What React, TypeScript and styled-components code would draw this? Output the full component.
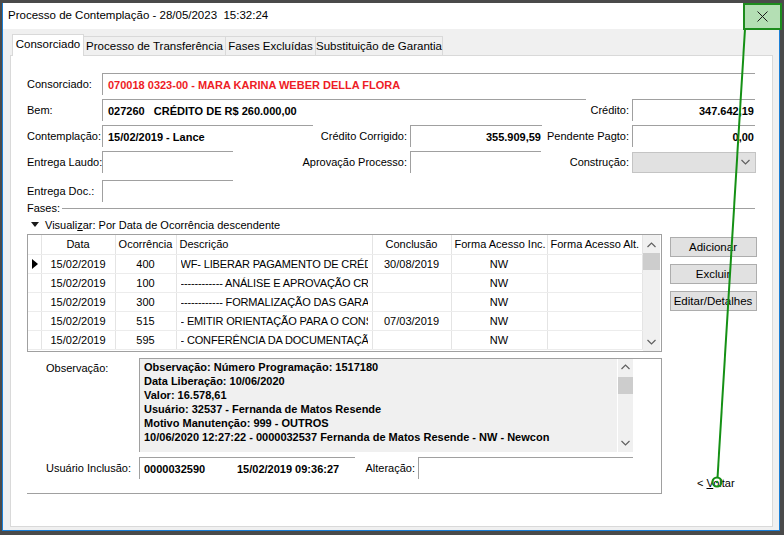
import React from "react";
import styled, { createGlobalStyle } from "styled-components";

const FONT = `"Liberation Sans", Arial, sans-serif`;
const LINE = "#a0a0a0";

type Fase = {
  data: string;
  ocorrencia: string;
  descricao: string;
  conclusao: string;
  acessoInc: string;
  acessoAlt: string;
};

const fases: Fase[] = [
  { data: "15/02/2019", ocorrencia: "400", descricao: "WF- LIBERAR PAGAMENTO DE CRÉDITO", conclusao: "30/08/2019", acessoInc: "NW", acessoAlt: "" },
  { data: "15/02/2019", ocorrencia: "100", descricao: "------------ ANÁLISE E APROVAÇÃO CRÉDITO", conclusao: "", acessoInc: "NW", acessoAlt: "" },
  { data: "15/02/2019", ocorrencia: "300", descricao: "------------ FORMALIZAÇÃO DAS GARANTIAS", conclusao: "", acessoInc: "NW", acessoAlt: "" },
  { data: "15/02/2019", ocorrencia: "515", descricao: "- EMITIR ORIENTAÇÃO PARA O CONSORCIADO", conclusao: "07/03/2019", acessoInc: "NW", acessoAlt: "" },
  { data: "15/02/2019", ocorrencia: "595", descricao: "- CONFERÊNCIA DA DOCUMENTAÇÃO DO BEM", conclusao: "", acessoInc: "NW", acessoAlt: "" },
];

const observacao = [
  "Observação: Número Programação: 1517180",
  "Data Liberação: 10/06/2020",
  "Valor: 16.578,61",
  "Usuário: 32537 - Fernanda de Matos Resende",
  "Motivo Manutenção: 999 - OUTROS",
  "10/06/2020 12:27:22 - 0000032537 Fernanda de Matos Resende - NW - Newcon",
];

const tabs = [
  { label: "Consorciado", w: 72 },
  { label: "Processo de Transferência", w: 143 },
  { label: "Fases Excluídas", w: 91 },
  { label: "Substituição de Garantia", w: 128 },
];

const Chevron: React.FC<{ up?: boolean }> = ({ up }) => (
  <svg width="9" height="6" viewBox="0 0 9 6">
    <polyline
      points={up ? "0.5,5 4.5,1 8.5,5" : "0.5,1 4.5,5 8.5,1"}
      fill="none"
      stroke="#606060"
      strokeWidth="1.2"
    />
  </svg>
);

const App: React.FC = () => {
  return (
    <Screen>
      <GlobalStyle />
      <Window>
        <TitleBar>
          <Title>Processo de Contemplação - 28/05/2023&nbsp; 15:32:24</Title>
          <CloseButton>
            <svg width="11" height="11" viewBox="0 0 11 11">
              <path d="M0.5 0.5 L10.5 10.5 M10.5 0.5 L0.5 10.5" stroke="#1a1a1a" strokeWidth="1" />
            </svg>
          </CloseButton>
        </TitleBar>
        <Client>
          <TabStrip>
            {tabs.map((t, i) => (
              <Tab key={t.label} $active={i === 0} $w={t.w}>
                {t.label}
              </Tab>
            ))}
          </TabStrip>
          <Panel>
            <FieldRow>
              <Label>Consorciado:</Label>
              <Box $w={653} $red>070018 0323-00 - MARA KARINA WEBER DELLA FLORA</Box>
            </FieldRow>
            <FieldRow>
              <Label>Bem:</Label>
              <Box $w={484}>027260&nbsp;&nbsp; CRÉDITO DE R$ 260.000,00</Box>
              <RightLabel $w={46}>Crédito:</RightLabel>
              <Box $w={123} $right>347.642,19</Box>
            </FieldRow>
            <FieldRow>
              <Label>Contemplação:</Label>
              <Box $w={211}>15/02/2019 - Lance</Box>
              <RightLabel $w={97}>Crédito Corrigido:</RightLabel>
              <Box $w={132} $right>355.909,59</Box>
              <RightLabel $w={90}>Pendente Pagto:</RightLabel>
              <Box $w={123} $right>0,00</Box>
            </FieldRow>
            <FieldRow $gap={7}>
              <Label>Entrega Laudo:</Label>
              <Box $w={131} />
              <RightLabel $w={177}>Aprovação Processo:</RightLabel>
              <Box $w={131} />
              <RightLabel $w={91}>Construção:</RightLabel>
              <Combo>
                <Chevron />
              </Combo>
            </FieldRow>
            <FieldRow $gap={0}>
              <Label>Entrega Doc.:</Label>
              <Box $w={131} />
            </FieldRow>
            <GroupHeader>
              <span>Fases:</span>
              <GroupLine />
            </GroupHeader>
            <ViewRow>
              <Triangle />
              <span>
                Visuali<u>z</u>ar: Por Data de Ocorrência descendente
              </span>
            </ViewRow>
            <GridRow>
              <Grid>
                <Table>
                  <colgroup>
                    <col style={{ width: 13 }} />
                    <col style={{ width: 74 }} />
                    <col style={{ width: 61 }} />
                    <col style={{ width: 196 }} />
                    <col style={{ width: 79 }} />
                    <col style={{ width: 96 }} />
                    <col style={{ width: 95 }} />
                  </colgroup>
                  <thead>
                    <tr>
                      <Th />
                      <Th $center>Data</Th>
                      <Th $center>Ocorrência</Th>
                      <Th>Descrição</Th>
                      <Th $center>Conclusão</Th>
                      <Th>Forma Acesso Inc.</Th>
                      <Th>Forma Acesso Alt.</Th>
                    </tr>
                  </thead>
                  <tbody>
                    {fases.map((f, i) => (
                      <tr key={f.ocorrencia}>
                        <RowHead>{i === 0 ? <Marker /> : null}</RowHead>
                        <Td $center>{f.data}</Td>
                        <Td $center>{f.ocorrencia}</Td>
                        <Td>
                          <Clip>{f.descricao}</Clip>
                        </Td>
                        <Td $center>{f.conclusao}</Td>
                        <Td $center>{f.acessoInc}</Td>
                        <Td $center>{f.acessoAlt}</Td>
                      </tr>
                    ))}
                  </tbody>
                </Table>
                <ScrollBar>
                  <Chevron up />
                  <Thumb $top={18} />
                  <Chevron />
                </ScrollBar>
              </Grid>
              <ButtonColumn>
                <Button>Adicionar</Button>
                <Button>Excluir</Button>
                <Button>Editar/Detalhes</Button>
              </ButtonColumn>
            </GridRow>
            <BottomRow>
              <ObsPanel>
                <ObsTop>
                  <SideLabel>Observação:</SideLabel>
                  <ObsFrame>
                    <ObsText>
                      {observacao.map((l) => (
                        <div key={l}>{l}</div>
                      ))}
                    </ObsText>
                    <ObsScroll>
                      <Chevron up />
                      <Thumb $top={18} />
                      <Chevron />
                    </ObsScroll>
                  </ObsFrame>
                </ObsTop>
                <UserRow>
                  <Label $w={93} $pad={19}>Usuário Inclusão:</Label>
                  <Box $w={216}>
                    <UserCode>0000032590</UserCode>
                    <span>15/02/2019 09:36:27</span>
                  </Box>
                  <RightLabel $w={63}>Alteração:</RightLabel>
                  <Box $w={215} />
                </UserRow>
              </ObsPanel>
              <BackLink>
                &lt; <u>V</u>oltar
              </BackLink>
            </BottomRow>
          </Panel>
        </Client>
      </Window>
      <Annotation width="784" height="535" viewBox="0 0 784 535">
        <line x1="745" y1="29" x2="717.5" y2="478" stroke="#159015" strokeWidth="2" />
        <circle cx="717" cy="482" r="4.5" fill="none" stroke="#159015" strokeWidth="2" />
        <circle cx="717" cy="482" r="1.2" fill="#159015" />
      </Annotation>
    </Screen>
  );
};

export default App;

const GlobalStyle = createGlobalStyle`
  html, body {
    margin: 0;
    padding: 0;
    background: #4a4a4a;
  }
  * {
    box-sizing: border-box;
  }
`;

const Screen = styled.div`
  position: relative;
  width: 784px;
  height: 535px;
  padding: 3px 4px 4px 2px;
  background: #4a4a4a;
  overflow: hidden;
  font-family: ${FONT};
  font-size: 11px;
  color: #000;
`;

const Window = styled.div`
  width: 778px;
  height: 528px;
  border: 1px solid #1b7fd6;
  border-top: none;
  display: flex;
  flex-direction: column;
`;

const TitleBar = styled.div`
  height: 26px;
  flex: none;
  display: flex;
  align-items: flex-start;
  background: #fff;
`;

const Title = styled.div`
  padding: 6px 0 0 5px;
  font-size: 11.5px;
  color: #000;
  white-space: nowrap;
`;

const CloseButton = styled.div`
  margin-left: auto;
  margin-right: -3px;
  width: 39px;
  height: 27px;
  background: #b4dfb4;
  border: 2px solid #1d8c1d;
  display: flex;
  align-items: center;
  justify-content: center;
  position: relative;
  z-index: 1;
`;

const Client = styled.div`
  flex: 1;
  background: #f0f0f0;
  padding: 5px 6px 3px 7px;
  display: flex;
  flex-direction: column;
`;

const TabStrip = styled.div`
  height: 21px;
  display: flex;
  align-items: flex-end;
  padding-left: 3px;
`;

const Tab = styled.div<{ $active?: boolean; $w: number }>`
  width: ${(p) => p.$w}px;
  height: ${(p) => (p.$active ? 22 : 19)}px;
  margin-bottom: ${(p) => (p.$active ? -1 : 0)}px;
  margin-left: -1px;
  background: ${(p) => (p.$active ? "#fff" : "#f0f0f0")};
  border: 1px solid #d9d9d9;
  border-bottom: none;
  display: flex;
  align-items: center;
  justify-content: center;
  padding-bottom: ${(p) => (p.$active ? 3 : 0)}px;
  font-size: 11.5px;
  white-space: nowrap;
  position: relative;
  z-index: ${(p) => (p.$active ? 2 : 1)};
`;

const Panel = styled.div`
  flex: 1;
  background: #fff;
  border: 1px solid #d9d9d9;
  padding: 17px 17px 0 16px;
  display: flex;
  flex-direction: column;
`;

const FieldRow = styled.div<{ $gap?: number }>`
  display: flex;
  align-items: center;
  height: 22px;
  margin-bottom: ${(p) => (p.$gap ?? 4)}px;
`;

const Label = styled.div<{ $w?: number; $pad?: number }>`
  width: ${(p) => p.$w ?? 75}px;
  padding-left: ${(p) => p.$pad ?? 0}px;
  flex: none;
  box-sizing: content-box;
  white-space: nowrap;
`;

const RightLabel = styled.div<{ $w: number }>`
  width: ${(p) => p.$w}px;
  flex: none;
  text-align: right;
  padding-right: 3px;
  white-space: nowrap;
`;

const Box = styled.div<{ $w: number; $red?: boolean; $right?: boolean }>`
  width: ${(p) => p.$w}px;
  height: 22px;
  flex: none;
  border-top: 1px solid ${LINE};
  border-left: 1px solid ${LINE};
  display: flex;
  align-items: center;
  justify-content: ${(p) => (p.$right ? "flex-end" : "flex-start")};
  padding: 0 ${(p) => (p.$right ? 1 : 4)}px 0 ${(p) => (p.$right ? 4 : 5)}px;
  font-weight: bold;
  color: ${(p) => (p.$red ? "#ee1c25" : "#000")};
  white-space: nowrap;
`;

const Combo = styled.div`
  width: 124px;
  height: 21px;
  flex: none;
  background: #e1e1e1;
  border: 1px solid #c4c4c4;
  display: flex;
  align-items: center;
  justify-content: flex-end;
  padding-right: 5px;
`;

const GroupHeader = styled.div`
  height: 12px;
  display: flex;
  align-items: center;
`;

const GroupLine = styled.div`
  flex: 1;
  border-top: 1px solid ${LINE};
  margin: 1px 0 0 2px;
`;

const ViewRow = styled.div`
  height: 13px;
  margin-top: 4px;
  display: flex;
  align-items: center;
  padding-left: 4px;
  gap: 6px;
`;

const Triangle = styled.div`
  width: 0;
  height: 0;
  border-left: 4px solid transparent;
  border-right: 4px solid transparent;
  border-top: 5px solid #1a1a1a;
`;

const GridRow = styled.div`
  display: flex;
  gap: 8px;
  margin-top: 3px;
  height: 118px;
`;

const Grid = styled.div`
  width: 635px;
  height: 118px;
  border: 1px solid ${LINE};
  display: flex;
  justify-content: space-between;
  padding-right: 1px;
  background: #fff;
`;

const Table = styled.table`
  width: 614px;
  table-layout: fixed;
  border-collapse: collapse;
  align-self: flex-start;
`;

const Th = styled.th<{ $center?: boolean }>`
  height: 19px;
  padding: 0 3px;
  font-weight: normal;
  text-align: ${(p) => (p.$center ? "center" : "left")};
  border-right: 1px solid #e4e4e4;
  border-bottom: 1px solid #ececec;
  white-space: nowrap;
  overflow: hidden;
`;

const Td = styled.td<{ $center?: boolean }>`
  height: 19px;
  padding: 0 4px;
  text-align: ${(p) => (p.$center ? "center" : "left")};
  border-right: 1px solid #e4e4e4;
  border-bottom: 1px solid #ececec;
  white-space: nowrap;
  overflow: hidden;
`;

const Clip = styled.div`
  overflow: hidden;
  white-space: nowrap;
  letter-spacing: -0.15px;
`;

const RowHead = styled.td`
  height: 19px;
  padding: 0;
  border-right: 1px solid #e4e4e4;
  border-bottom: 1px solid #ececec;
  vertical-align: middle;
`;

const Marker = styled.div`
  width: 0;
  height: 0;
  margin-left: 4px;
  border-top: 5px solid transparent;
  border-bottom: 5px solid transparent;
  border-left: 6px solid #000;
`;

const ScrollBar = styled.div`
  width: 17px;
  height: 116px;
  background: #f0f0f0;
  display: flex;
  flex-direction: column;
  align-items: center;
  justify-content: space-between;
  padding: 7px 0 6px;
  position: relative;
`;

const Thumb = styled.div<{ $top: number }>`
  position: absolute;
  left: 0;
  top: ${(p) => p.$top}px;
  width: 100%;
  height: 17px;
  background: #cdcdcd;
`;

const ButtonColumn = styled.div`
  display: flex;
  flex-direction: column;
  gap: 7px;
  padding-top: 3px;
`;

const Button = styled.div`
  width: 87px;
  height: 20px;
  background: #e1e1e1;
  border: 1px solid #adadad;
  display: flex;
  align-items: center;
  justify-content: center;
  font-size: 11.5px;
`;

const BottomRow = styled.div`
  display: flex;
  margin-top: 6px;
`;

const ObsPanel = styled.div`
  width: 635px;
  height: 136px;
  border-right: 1px solid ${LINE};
  border-bottom: 1px solid ${LINE};
  display: flex;
  flex-direction: column;
`;

const ObsTop = styled.div`
  display: flex;
  height: 94px;
`;

const SideLabel = styled.div`
  width: 93px;
  padding-left: 19px;
  padding-top: 4px;
  box-sizing: content-box;
  flex: none;
`;

const ObsFrame = styled.div`
  flex: 1;
  border-top: 1px solid ${LINE};
  border-left: 1px solid ${LINE};
  display: flex;
`;

const ObsText = styled.div`
  width: 477px;
  background: #f0f0f0;
  padding: 1px 0 0 4px;
  font-weight: bold;
  line-height: 14px;
  white-space: nowrap;
  overflow: hidden;
`;

const ObsScroll = styled(ScrollBar)`
  width: 16px;
  height: 93px;
  padding: 5px 0 6px;
  border-left: 1px solid #fff;
`;

const UserRow = styled.div`
  display: flex;
  align-items: center;
  height: 22px;
  margin-top: 5px;
`;

const UserCode = styled.span`
  width: 93px;
  flex: none;
  margin-left: -1px;
`;

const BackLink = styled.div`
  align-self: flex-end;
  margin: 0 0 5px 35px;
  white-space: nowrap;
`;

const Annotation = styled.svg`
  position: absolute;
  left: 0;
  top: 0;
  pointer-events: none;
`;
